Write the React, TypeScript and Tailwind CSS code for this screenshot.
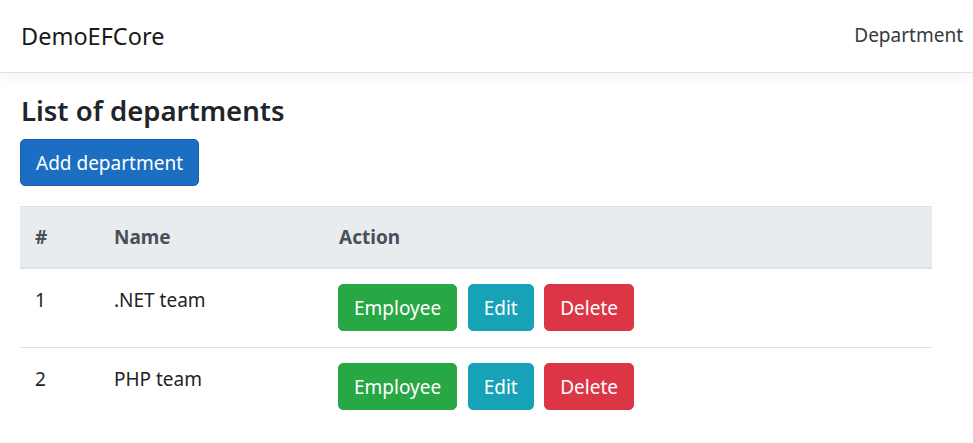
const departments = [
  { id: 1, name: '.NET team' },
  { id: 2, name: 'PHP team' },
]

function ActionButton({ label, color }: { label: string; color: string }) {
  return (
    <button className={`h-[47px] rounded-[5px] border px-[15px] text-[19px] leading-[30px] text-white ${color}`}>
      {label}
    </button>
  )
}

export default function App() {
  return (
    <div className="min-h-screen bg-white text-[#212529] font-['Segoe_UI','Noto_Sans',sans-serif]">
      <nav className="h-[73px] flex items-center justify-between border-b border-[#dee2e6] bg-white shadow-[0_5px_15px_rgba(0,0,0,0.05)] pl-[21px] pr-[10px] relative">
        <span className="text-[23.5px] text-[#1a1a1a] leading-[36px]">DemoEFCore</span>
        <a className="text-[19px] text-[#343a40] leading-[30px] -mt-[2px]">Department</a>
      </nav>

      <main className="pl-[20px] pt-[20px] w-[932px]">
        <h4 className="text-[27.5px] font-semibold leading-[36px] mb-[10px] pl-[1px] text-[#212529]">List of departments</h4>
        <p className="mb-[20px]">
          <button className="h-[47px] rounded-[5px] border border-[#1861ac] bg-[#1b6ec2] px-[15px] text-[19px] leading-[30px] text-white">
            Add department
          </button>
        </p>

        <table className="w-[912px] border-collapse text-[19px] leading-[30px]">
          <thead>
            <tr className="bg-[#e9ecef] text-[#495057]">
              <th className="w-[79px] border-t border-b-2 border-[#dee2e6] p-[15px] text-left font-bold">#</th>
              <th className="w-[225px] border-t border-b-2 border-[#dee2e6] p-[15px] text-left font-bold">Name</th>
              <th className="border-t border-b-2 border-[#dee2e6] p-[15px] text-left font-bold">Action</th>
            </tr>
          </thead>
          <tbody>
            {departments.map((d, i) => (
              <tr key={d.id} className={i > 0 ? 'border-t border-[#dee2e6]' : ''}>
                <td className="px-[15px] pt-[16px] pb-[15px] align-top">{d.id}</td>
                <td className="px-[15px] pt-[16px] pb-[15px] align-top">{d.name}</td>
                <td className="px-[14px] pt-[15px] pb-[16px] align-top">
                  <div className="flex gap-[10.5px]">
                    <ActionButton label="Employee" color="bg-[#28a745] border-[#28a745]" />
                    <ActionButton label="Edit" color="bg-[#17a2b8] border-[#17a2b8]" />
                    <ActionButton label="Delete" color="bg-[#dc3545] border-[#dc3545]" />
                  </div>
                </td>
              </tr>
            ))}
          </tbody>
        </table>
      </main>
    </div>
  )
}
